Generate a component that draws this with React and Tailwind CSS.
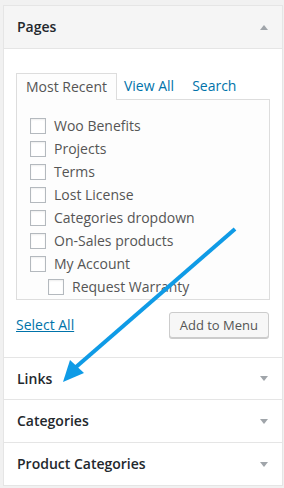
import React from "react";

const pages = [
  { name: "Woo Benefits" },
  { name: "Projects" },
  { name: "Terms" },
  { name: "Lost License" },
  { name: "Categories dropdown" },
  { name: "On-Sales products" },
  { name: "My Account" },
  { name: "Request Warranty", child: true },
];

const sections = [
  { name: "Links", h: "h-[42px]" },
  { name: "Categories", h: "h-[43px]" },
  { name: "Product Categories", h: "h-[43px]" },
];

function Caret({ up }) {
  return (
    <svg width="8" height="5" viewBox="0 0 8 5" className="mr-[14px]">
      <polygon points={up ? "4,0 8,5 0,5" : "0,0 8,0 4,5"} fill="#a0a5aa" />
    </svg>
  );
}

export default function App() {
  return (
    <div
      className="relative w-[284px] h-[488px] bg-[#f1f1f1] pt-[5px] overflow-hidden"
      style={{ fontFamily: '"Open Sans", sans-serif' }}
    >
      <div className="ml-[3px] w-[280px] border border-[#e5e5e5] bg-white">
        <div className="h-[43px] flex items-center justify-between border-b border-[#e5e5e5] bg-[#f5f5f5] pl-[13px]">
          <span className="text-[14px] leading-[18px] font-semibold text-[#23282d]">Pages</span>
          <Caret up />
        </div>

        <div className="px-[12px] pt-[23px] pb-[19px]">
          <div className="flex items-end text-[14px] leading-[18px]">
            <div className="h-[27px] flex items-center px-[9px] border border-b-0 border-[#dddddd] bg-[#fdfdfd] text-[#555] -mb-px relative z-10">
              Most Recent
            </div>
            <div className="h-[27px] flex items-center pl-[7px] pr-[9px] text-[#0073aa]">View All</div>
            <div className="h-[27px] flex items-center pl-[9px] text-[#0073aa]">Search</div>
          </div>
          <div className="border border-[#dddddd] bg-[#fdfdfd] pl-[13px] pt-[14px] pb-[1px]">
            {pages.map((p) => (
              <label
                key={p.name}
                className={`h-[23px] flex items-center gap-[8px] text-[14px] leading-[18px] text-[#555] ${p.child ? "pl-[18px]" : ""}`}
              >
                <span className="w-[16px] h-[16px] border border-[#b4b9be] bg-white shadow-[inset_0_1px_2px_rgba(0,0,0,0.07)]" />
                {p.name}
              </label>
            ))}
          </div>
          <div className="mt-[12px] flex items-center justify-between">
            <span className="text-[14px] leading-[18px] text-[#0073aa] underline">Select All</span>
            <button className="h-[26px] px-[10px] mr-px rounded-[3px] border border-[#cccccc] bg-[#f7f7f7] shadow-[0_1px_0_#cccccc] text-[13px] leading-[18px] text-[#555]">
              Add to Menu
            </button>
          </div>
        </div>

        {sections.map((s) => (
          <div
            key={s.name}
            className={`${s.h} flex items-center justify-between border-t border-[#e5e5e5] pl-[13px]`}
          >
            <span className="text-[14px] leading-[18px] font-semibold text-[#23282d]">{s.name}</span>
            <Caret />
          </div>
        ))}
      </div>

      <svg className="absolute inset-0 pointer-events-none" width="284" height="488">
        <line x1="235" y1="229" x2="76" y2="367" stroke="#0f9be6" strokeWidth="4" />
        <polygon points="63,382 70,360 84,373" fill="#0f9be6" />
      </svg>
    </div>
  );
}
